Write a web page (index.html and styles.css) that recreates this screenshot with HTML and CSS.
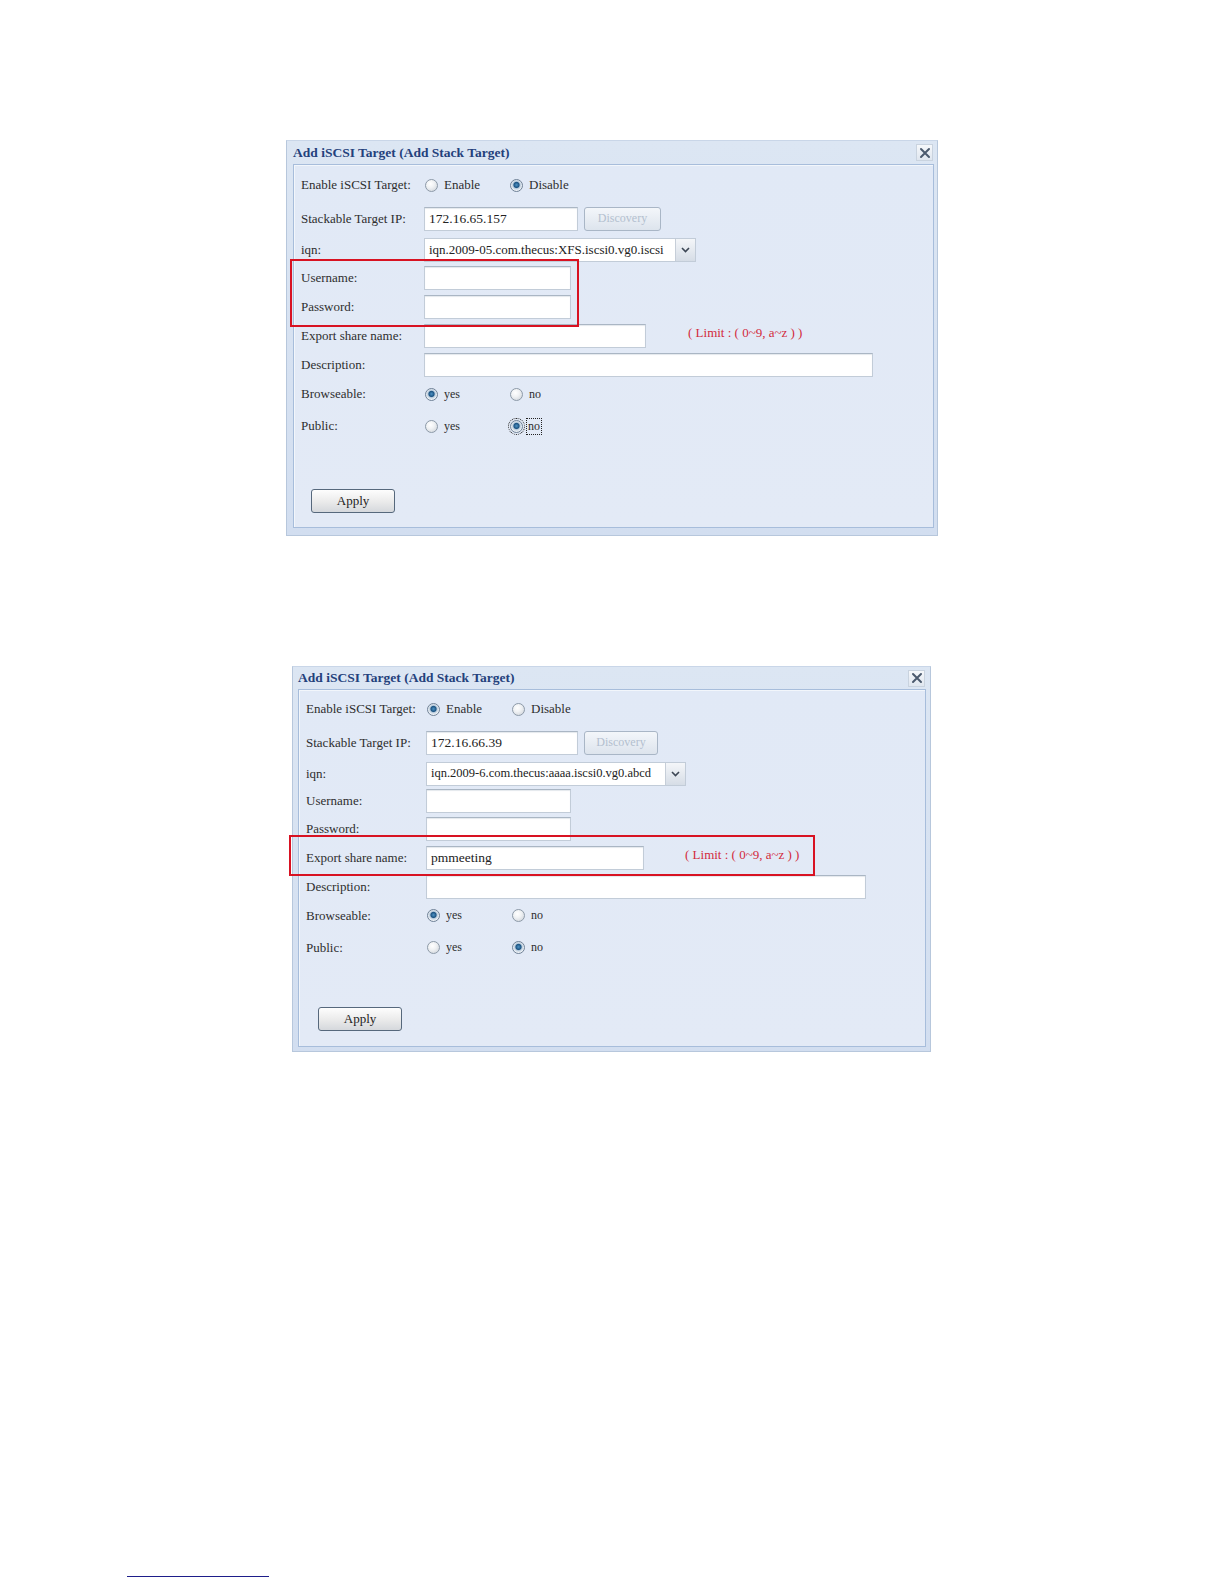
FILE: index.html
```html
<!DOCTYPE html>
<html lang="en">
<head>
  <meta charset="UTF-8" />
  <title>Add iSCSI Target (Add Stack Target)</title>
  <link rel="stylesheet" href="styles.css">
</head>
<body>

  <div class="page">

    <!-- first screenshot: login fields highlighted -->
    <div class="dialog dialog-a">
      <div class="titlebar">
        <span class="title">Add iSCSI Target (Add Stack Target)</span>
        <span class="close">
          <svg width="12" height="12" viewBox="0 0 12 12"><path d="M2 2 L10 10 M10 2 L2 10" stroke="#4b5a6e" stroke-width="2" stroke-linecap="round"/></svg>
        </span>
      </div>
      <div class="panel">
        <div class="row row-enable">
          <span class="label">Enable iSCSI Target:</span>
          <span class="choice"><span class="radio"></span>Enable</span>
          <span class="choice"><span class="radio on"></span>Disable</span>
        </div>
        <div class="row row-ip">
          <span class="label">Stackable Target IP:</span>
          <span class="field field-ip">172.16.65.157</span>
          <span class="btn-discovery">Discovery</span>
        </div>
        <div class="row row-iqn">
          <span class="label">iqn:</span>
          <span class="select"><span class="select-text">iqn.2009-05.com.thecus:XFS.iscsi0.vg0.iscsi</span><span class="select-arrow"><svg width="9" height="6" viewBox="0 0 9 6"><path d="M1 1 L4.5 4.5 L8 1" fill="none" stroke="#3c4654" stroke-width="1.6"/></svg></span></span>
        </div>
        <div class="row">
          <span class="label">Username:</span>
          <span class="field field-user"></span>
        </div>
        <div class="row">
          <span class="label">Password:</span>
          <span class="field field-user"></span>
        </div>
        <div class="row">
          <span class="label">Export share name:</span>
          <span class="field field-share"></span>
          <span class="limit">( Limit : ( 0~9, a~z ) )</span>
        </div>
        <div class="row">
          <span class="label">Description:</span>
          <span class="field field-desc"></span>
        </div>
        <div class="row row-browse">
          <span class="label">Browseable:</span>
          <span class="choice choice-small"><span class="radio on"></span>yes</span>
          <span class="choice choice-small"><span class="radio"></span>no</span>
        </div>
        <div class="row row-public">
          <span class="label">Public:</span>
          <span class="choice choice-small"><span class="radio"></span>yes</span>
          <span class="choice choice-small focused"><span class="radio on"></span><span class="focus-text">no</span></span>
        </div>
        <div class="actions">
          <span class="apply">Apply</span>
        </div>
      </div>
      <div class="mark mark-login"></div>
    </div>

    <!-- second screenshot: export share name highlighted -->
    <div class="dialog dialog-b">
      <div class="titlebar">
        <span class="title">Add iSCSI Target (Add Stack Target)</span>
        <span class="close">
          <svg width="12" height="12" viewBox="0 0 12 12"><path d="M2 2 L10 10 M10 2 L2 10" stroke="#4b5a6e" stroke-width="2" stroke-linecap="round"/></svg>
        </span>
      </div>
      <div class="panel">
        <div class="row row-enable">
          <span class="label">Enable iSCSI Target:</span>
          <span class="choice"><span class="radio on"></span>Enable</span>
          <span class="choice"><span class="radio"></span>Disable</span>
        </div>
        <div class="row row-ip">
          <span class="label">Stackable Target IP:</span>
          <span class="field field-ip">172.16.66.39</span>
          <span class="btn-discovery">Discovery</span>
        </div>
        <div class="row row-iqn">
          <span class="label">iqn:</span>
          <span class="select"><span class="select-text">iqn.2009-6.com.thecus:aaaa.iscsi0.vg0.abcd</span><span class="select-arrow"><svg width="9" height="6" viewBox="0 0 9 6"><path d="M1 1 L4.5 4.5 L8 1" fill="none" stroke="#3c4654" stroke-width="1.6"/></svg></span></span>
        </div>
        <div class="row">
          <span class="label">Username:</span>
          <span class="field field-user"></span>
        </div>
        <div class="row row-pass">
          <span class="label">Password:</span>
          <span class="field field-user"></span>
        </div>
        <div class="row">
          <span class="label">Export share name:</span>
          <span class="field field-share">pmmeeting</span>
          <span class="limit">( Limit : ( 0~9, a~z ) )</span>
        </div>
        <div class="row">
          <span class="label">Description:</span>
          <span class="field field-desc"></span>
        </div>
        <div class="row row-browse">
          <span class="label">Browseable:</span>
          <span class="choice choice-small"><span class="radio on"></span>yes</span>
          <span class="choice choice-small"><span class="radio"></span>no</span>
        </div>
        <div class="row row-public">
          <span class="label">Public:</span>
          <span class="choice choice-small"><span class="radio"></span>yes</span>
          <span class="choice choice-small"><span class="radio on"></span>no</span>
        </div>
        <div class="actions">
          <span class="apply">Apply</span>
        </div>
      </div>
      <div class="mark mark-share"></div>
    </div>

    <div class="footnote-rule"></div>
  </div>

</body>
</html>
```

FILE: styles.css
```css
body {
  margin: 0;
  background: #fff;
  font-family: "Liberation Serif", "Times New Roman", serif;
  color: #2e2e2e;
}

.page {
  padding-top: 140px;
  height: 1584px;
  box-sizing: border-box;
  overflow: hidden;
}

/* window frame */
.dialog {
  position: relative;
  box-sizing: border-box;
  background: linear-gradient(#dce6f3, #d2def0);
  border: 1px solid #b7c7dc;
  border-top-color: #c9d6e8;
}

.dialog-a {
  width: 652px;
  margin-left: 286px;
  padding: 0 3px 7px 6px;
}

.dialog-b {
  width: 639px;
  margin-left: 292px;
  margin-top: 130px;
  padding: 0 4px 4px 5px;
}

.titlebar {
  height: 23px;
  display: flex;
  align-items: center;
  justify-content: space-between;
}

.dialog-b .titlebar { height: 22px; }

.title {
  font-size: 13.5px;
  font-weight: bold;
  color: #24417c;
}

.close {
  width: 15px;
  height: 15px;
  display: flex;
  align-items: center;
  justify-content: center;
  background: linear-gradient(#f6f8fb, #dfe6ef);
  border: 1px solid #c9d3df;
  margin-right: 1px;
}

.panel {
  box-sizing: border-box;
  background: linear-gradient(#e1e9f6, #e3eaf6);
  border: 1px solid #a7bddb;
  box-shadow: inset 1px 1px 0 #f2f6fb;
  padding: 4px 0 14px 7px;
  font-size: 13px;
}

.dialog-a .panel { height: 364px; }
.dialog-b .panel { height: 358px; }

.row {
  display: flex;
  align-items: center;
  height: 29px;
}

.label {
  width: 123px;
  flex: none;
}

.dialog-b .label { width: 120px; }

.dialog-a .row-enable { height: 32px; }
.dialog-a .row-ip { height: 35px; }
.dialog-a .row-iqn { height: 27px; }
.dialog-a .row-browse { height: 30px; }
.dialog-a .row-public { height: 34px; }

.dialog-b .row-enable { height: 30px; }
.dialog-b .row-ip { height: 37px; }
.dialog-b .row-iqn { height: 25px; }
.dialog-b .row-pass { height: 28px; }
.dialog-b .row-public { height: 35px; }

/* radios */
.choice {
  display: inline-flex;
  align-items: center;
  width: 85px;
}

.choice-small { font-size: 12px; }

.radio {
  width: 13px;
  height: 13px;
  box-sizing: border-box;
  border-radius: 50%;
  border: 1px solid #8d9aa8;
  background: radial-gradient(circle at 40% 35%, #ffffff 0, #f0f2f4 40%, #c9cfd6 100%);
  margin: 0 6px 0 1px;
  flex: none;
}

.radio.on {
  border-color: #6f8196;
  background: radial-gradient(circle at 50% 45%, #4f93c4 0, #1d5584 2.6px, #b9cbdc 3.6px, #eef2f6 5.5px);
}

.focused .radio {
  outline: 1px dotted #222;
  outline-offset: 1px;
}

.focus-text {
  outline: 1px dotted #222;
  padding: 0 1px;
  margin-left: -2px;
}

/* text fields */
.field {
  box-sizing: border-box;
  height: 24px;
  background: #fff;
  border: 1px solid #c2ccd8;
  border-top-color: #aab6c4;
  box-shadow: inset 0 1px 1px #e4e8ed;
  padding: 0 4px;
  display: flex;
  align-items: center;
  font-size: 13.5px;
  color: #222;
}

.dialog-a .field-ip { width: 154px; }
.dialog-a .field-user { width: 147px; }
.dialog-a .field-share { width: 222px; }
.dialog-a .field-desc { width: 449px; }

.dialog-b .field-ip { width: 152px; }
.dialog-b .field-user { width: 145px; }
.dialog-b .field-share { width: 218px; }
.dialog-b .field-desc { width: 440px; }

.btn-discovery {
  box-sizing: border-box;
  height: 24px;
  margin-left: 6px;
  border: 1px solid #a9b6c6;
  border-radius: 3px;
  background: linear-gradient(#f3f6fa, #dde4ed);
  color: #b3bfcf;
  font-size: 12px;
  display: flex;
  align-items: center;
  justify-content: center;
}

.dialog-a .btn-discovery { width: 77px; }
.dialog-b .btn-discovery { width: 74px; }

/* dropdown */
.select {
  box-sizing: border-box;
  height: 24px;
  display: flex;
  background: #fff;
  border: 1px solid #c2ccd8;
  font-size: 13px;
  color: #222;
}

.dialog-a .select { width: 272px; }
.dialog-b .select { width: 260px; }

.select-text {
  flex: 1;
  padding-left: 4px;
  display: flex;
  align-items: center;
  white-space: nowrap;
  overflow: hidden;
}

.dialog-b .select-text { font-size: 12.5px; }

.select-arrow {
  width: 19px;
  flex: none;
  border-left: 1px solid #c6ced8;
  background: linear-gradient(#f4f6f9, #d6dde6);
  display: flex;
  align-items: center;
  justify-content: center;
}

.limit {
  color: #d22a3c;
  font-size: 13px;
  margin-top: -6px;
}

.dialog-a .limit { margin-left: 42px; }
.dialog-b .limit { margin-left: 41px; }

/* apply button */
.actions {
  padding-left: 10px;
}

.dialog-a .actions { margin-top: 46px; }
.dialog-b .actions { margin-top: 42px; padding-left: 12px; }

.apply {
  box-sizing: border-box;
  width: 84px;
  height: 24px;
  display: flex;
  align-items: center;
  justify-content: center;
  border: 1px solid #56687c;
  border-radius: 3px;
  background: linear-gradient(#fdfdfd, #ececec 50%, #d5d8dc);
  font-size: 13px;
  color: #222;
}

/* red annotation frames drawn over the screenshot */
.mark {
  position: absolute;
  border: 2px solid #d81222;
  box-sizing: border-box;
}

.mark-login {
  left: 3px;
  top: 118px;
  width: 289px;
  height: 68px;
}

.mark-share {
  left: -4px;
  top: 168px;
  width: 526px;
  height: 41px;
}

.footnote-rule {
  margin: 524px 0 0 127px;
  width: 142px;
  border-top: 1px solid #1e1e8a;
}
```
